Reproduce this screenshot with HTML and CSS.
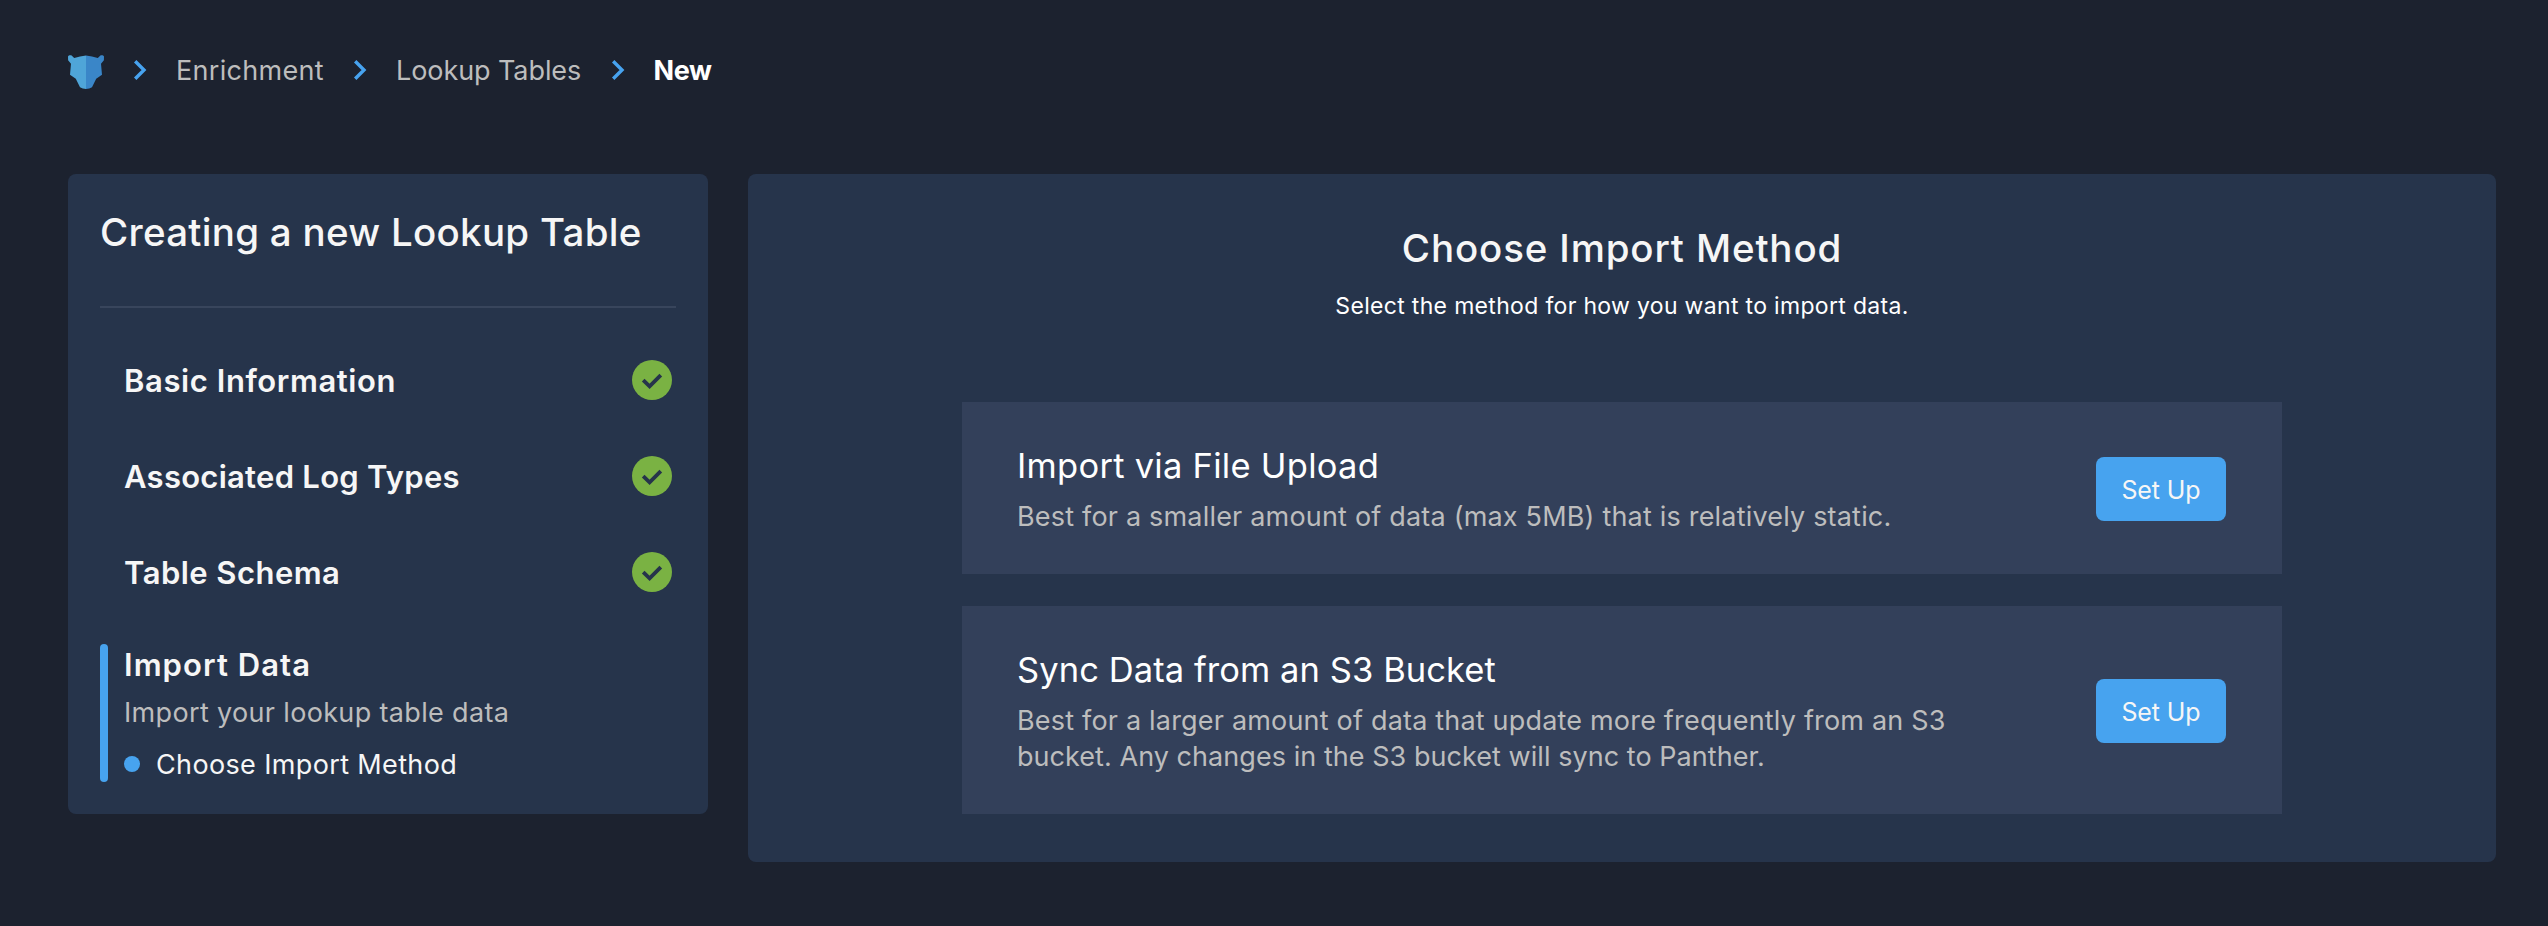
FILE: index.html
```
<!DOCTYPE html>
<html lang="en">
<head>
<meta charset="utf-8">
<title>New Lookup Table</title>
<link rel="stylesheet" href="styles.css">
</head>
<body>
<svg width="0" height="0" class="defs" aria-hidden="true">
  <symbol id="chevron" viewBox="0 0 14 22"><path d="M2.2 2.2 11 11 2.2 19.8" fill="none" stroke="#47a3ef" stroke-width="3.4"/></symbol>
  <symbol id="check" viewBox="0 0 40 40"><circle cx="20" cy="20" r="20" fill="#7ab243"/><path d="M11.2 20.2 17.6 26.4 28.8 15.2" fill="none" stroke="#26344b" stroke-width="3.8"/></symbol>
</svg>
<nav class="breadcrumbs">
  <svg class="logo" viewBox="0 0 36 34">
    <path fill="#4fa5d8" d="M18 .5 12 1.5 6.2 2.9 3.6.6C2.5 0 .4.3 0 1.6L.1 5.2 3 8.8 2 19.8 7.8 23.8 12 32.2Q14.5 34 18 34Z"/>
    <path fill="#3a86c8" d="M18 .5 24 1.5 29.8 2.9 32.4.6C33.5 0 35.6.3 36 1.6L35.9 5.2 33 8.8 34 19.8 28.2 23.8 24 32.2Q21.5 34 18 34Z"/>
  </svg>
  <svg class="chevron"><use href="#chevron"/></svg>
  <a class="crumb crumb-section">Enrichment</a>
  <svg class="chevron"><use href="#chevron"/></svg>
  <a class="crumb crumb-page">Lookup Tables</a>
  <svg class="chevron"><use href="#chevron"/></svg>
  <span class="crumb crumb-current">New</span>
</nav>
<main class="layout">
  <aside class="panel wizard">
    <h2 class="wizard-title">Creating a new Lookup Table</h2>
    <ul class="steps">
      <li class="step"><span class="step-name basic">Basic Information</span><svg class="check"><use href="#check"/></svg></li>
      <li class="step"><span class="step-name logs">Associated Log Types</span><svg class="check"><use href="#check"/></svg></li>
      <li class="step"><span class="step-name schema">Table Schema</span><svg class="check"><use href="#check"/></svg></li>
    </ul>
    <div class="active-step">
      <div class="active-bar"></div>
      <div class="active-body">
        <div class="active-name">Import Data</div>
        <div class="active-desc">Import your lookup table data</div>
        <div class="substep"><i class="dot"></i><span class="substep-name">Choose Import Method</span></div>
      </div>
    </div>
  </aside>
  <section class="panel content">
    <h1 class="heading">Choose Import Method</h1>
    <p class="subheading">Select the method for how you want to import data.</p>
    <div class="cards">
      <div class="card">
        <div class="card-text">
          <h3 class="card-title upload">Import via File Upload</h3>
          <p class="card-desc">Best for a smaller amount of data (max 5MB) that is relatively static.</p>
        </div>
        <button class="button">Set Up</button>
      </div>
      <div class="card">
        <div class="card-text">
          <h3 class="card-title bucket">Sync Data from an S3 Bucket</h3>
          <p class="card-desc">Best for a larger amount of data that update more frequently from an S3<br><span class="tight">bucket. Any changes in the S3 bucket will sync to Panther.</span></p>
        </div>
        <button class="button">Set Up</button>
      </div>
    </div>
  </section>
</main>
</body>
</html>
```
FILE: styles.css
```
* { box-sizing: border-box; margin: 0; padding: 0; }
body {
  min-height: 926px;
  padding: 50px 52px 0 68px;
  background: #1c222f;
  color: #f6f6f6;
  font-family: "Inter", "Liberation Sans", sans-serif;
  white-space: nowrap;
  overflow: hidden;
}
.defs { position: absolute; }

.breadcrumbs {
  display: grid;
  grid-template-columns: 36px 72px 148.5px 71.5px 186px 71.6px auto;
  align-items: center;
  height: 40px;
}
.logo { width: 36px; height: 34px; margin-top: 3px; }
.chevron { width: 14px; height: 22px; justify-self: center; }
.crumb { padding-top: 2px; font-size: 27px; line-height: 38px; color: #bdbdbd; }
.crumb-section { letter-spacing: 0.295px; }
.crumb-page { letter-spacing: -0.082px; }
.crumb-current { color: #fff; font-weight: 700; letter-spacing: -0.5px; }

.layout {
  display: grid;
  grid-template-columns: 640px 1748px;
  gap: 40px;
  align-items: start;
  margin-top: 84px;
}
.panel { background: #26344b; border-radius: 8px; }

.wizard { height: 640px; padding: 32px; }
.wizard-title {
  padding-bottom: 48px;
  border-bottom: 2px solid #38455c;
  font-size: 38.5px;
  line-height: 52px;
  font-weight: 500;
  letter-spacing: 0.28px;
}
.steps { display: grid; gap: 56px; margin-top: 52px; list-style: none; }
.step {
  display: flex;
  justify-content: space-between;
  height: 40px;
  padding: 0 4px 0 24px;
}
.step-name { font-size: 31px; line-height: 41px; font-weight: 600; }
.basic { letter-spacing: 0.58px; }
.logs { letter-spacing: 0.27px; }
.schema { letter-spacing: 0.46px; }
.check { width: 40px; height: 40px; }
.active-step { display: flex; gap: 16px; height: 138px; margin-top: 52px; }
.active-bar { width: 8px; border-radius: 4px; background: #47a3ef; }
.active-name {
  font-size: 31px;
  line-height: 42px;
  font-weight: 600;
  letter-spacing: 1.06px;
}
.active-desc {
  margin-top: 9px;
  color: #bdbdbd;
  font-size: 27px;
  line-height: 36px;
  letter-spacing: 0.34px;
}
.substep {
  display: flex;
  align-items: center;
  gap: 16px;
  margin-top: 15px;
  font-size: 27px;
  line-height: 34px;
  letter-spacing: 0.36px;
}
.substep-name { padding-top: 2px; }
.dot { width: 16px; height: 16px; border-radius: 50%; background: #47a3ef; }

.content {
  display: flex;
  flex-direction: column;
  align-items: center;
  height: 688px;
  padding-top: 48px;
}
.heading { font-size: 38.5px; line-height: 52px; font-weight: 500; letter-spacing: 0.85px; }
.subheading {
  margin-top: 14px;
  color: #fff;
  font-size: 23px;
  line-height: 36px;
  letter-spacing: 0.32px;
}
.cards { display: grid; gap: 32px; width: 1320px; margin-top: 78px; }
.card {
  display: flex;
  align-items: center;
  justify-content: space-between;
  padding: 40px 56px 39px 55px;
  background: #33405a;
}
.card-title {
  color: #fff;
  font-size: 34.5px;
  line-height: 47px;
  font-weight: 400;
}
.upload { letter-spacing: 0.27px; }
.bucket { letter-spacing: 0.078px; }
.card-desc {
  margin-top: 10px;
  color: #bdbdbd;
  font-size: 27px;
  line-height: 36px;
  letter-spacing: 0.19px;
}
.tight { letter-spacing: 0.049px; }
.button {
  width: 130px;
  height: 64px;
  padding-top: 2px;
  border: 0;
  border-radius: 8px;
  background: #47a3ef;
  color: #f6f6f6;
  font-family: inherit;
  font-size: 25px;
  letter-spacing: -0.086px;
}
```
